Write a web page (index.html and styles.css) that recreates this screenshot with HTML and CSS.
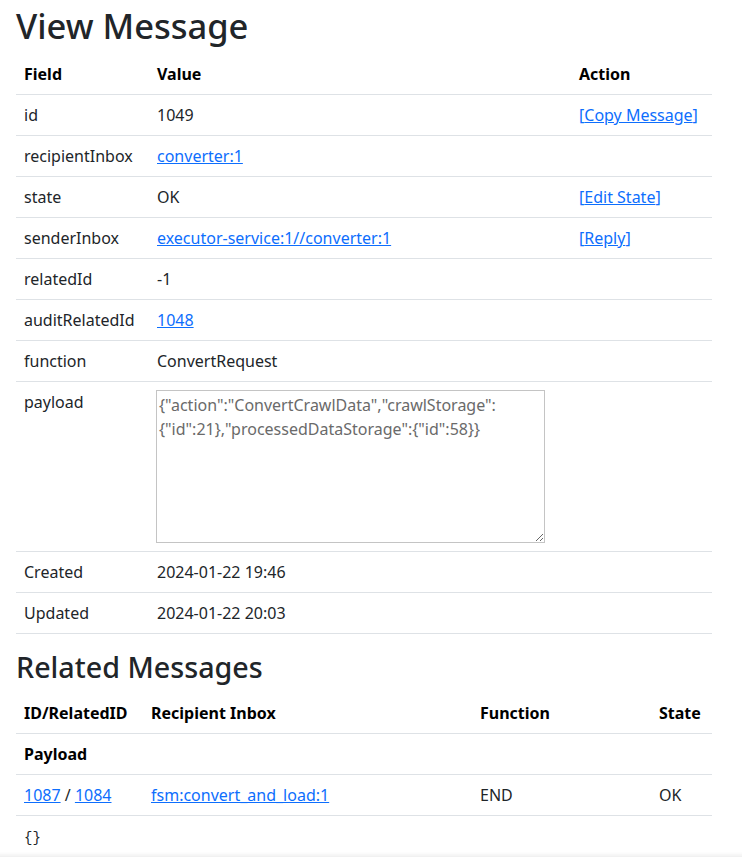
FILE: index.html
```html
<!DOCTYPE html>
<html>
<head>
<meta charset="utf-8">
<title>View Message</title>
<link rel="stylesheet" href="styles.css">
</head>
<body>
<main class="page">
  <h1 class="title">View Message</h1>
  <table class="tbl">
    <colgroup>
      <col class="c-field">
      <col class="c-value">
      <col class="c-action">
    </colgroup>
    <thead>
      <tr><th>Field</th><th>Value</th><th>Action</th></tr>
    </thead>
    <tbody>
      <tr><td>id</td><td>1049</td><td><a class="act" href="#">[<span>Copy Message</span>]</a></td></tr>
      <tr><td>recipientInbox</td><td><a href="#">converter:1</a></td><td></td></tr>
      <tr><td>state</td><td>OK</td><td><a class="act" href="#">[<span>Edit State</span>]</a></td></tr>
      <tr><td>senderInbox</td><td><a href="#">executor-service:1//converter:1</a></td><td><a class="act" href="#">[<span>Reply</span>]</a></td></tr>
      <tr><td>relatedId</td><td>-1</td><td></td></tr>
      <tr><td>auditRelatedId</td><td><a href="#">1048</a></td><td></td></tr>
      <tr><td>function</td><td>ConvertRequest</td><td></td></tr>
      <tr class="top"><td>payload</td><td><textarea class="payload" readonly>{"action":"ConvertCrawlData","crawlStorage":{"id":21},"processedDataStorage":{"id":58}}</textarea></td><td></td></tr>
      <tr><td>Created</td><td>2024-01-22 19:46</td><td></td></tr>
      <tr><td>Updated</td><td>2024-01-22 20:03</td><td></td></tr>
    </tbody>
  </table>

  <h2 class="subtitle">Related Messages</h2>
  <table class="tbl">
    <colgroup>
      <col class="c-id">
      <col class="c-inbox">
      <col class="c-func">
      <col class="c-state">
    </colgroup>
    <thead>
      <tr><th>ID/RelatedID</th><th>Recipient Inbox</th><th>Function</th><th>State</th></tr>
      <tr><th colspan="4">Payload</th></tr>
    </thead>
    <tbody>
      <tr><td><a href="#">1087</a> / <a href="#">1084</a></td><td><a href="#">fsm:convert_and_load:1</a></td><td>END</td><td>OK</td></tr>
      <tr><td colspan="4"><code class="json">{}</code></td></tr>
    </tbody>
  </table>
</main>
<div class="bottom-shade"></div>
</body>
</html>
```

FILE: styles.css
```css
html, body {
  margin: 0;
  padding: 0;
  background: #fff;
}
body {
  font-family: "Noto Sans", sans-serif;
  font-size: 16px;
  line-height: 1.5;
  color: #212529;
}
.page {
  padding: 0 30px 0 16px;
}
.title {
  margin: 0 0 8px;
  padding-top: 5px;
  font-size: 34.5px;
  font-weight: 500;
  line-height: 1.2;
}
.subtitle {
  margin: 0 0 8px;
  font-size: 28.7px;
  font-weight: 500;
  line-height: 1.2;
}
.tbl {
  width: 100%;
  border-collapse: collapse;
  table-layout: fixed;
  margin-bottom: 16px;
}
.tbl th, .tbl td {
  padding: 8px;
  text-align: left;
  vertical-align: top;
  border-bottom: 1px solid #dee2e6;
}
.tbl th {
  font-weight: 700;
  color: #000;
}
.c-field { width: 133px; }
.c-action { width: 141px; }
.c-id { width: 127px; }
.c-func { width: 179px; }
.c-state { width: 61px; }
a {
  color: #0d6efd;
  text-decoration: underline;
}
a.act {
  text-decoration: none;
}
a.act span {
  text-decoration: underline;
}
.payload {
  display: block;
  box-sizing: border-box;
  width: 389px;
  height: 153px;
  margin: 0 0 0 -1px;
  padding: 2px;
  border: 1px solid #c4c4c4;
  font-family: "Noto Sans", sans-serif;
  font-size: 16px;
  line-height: 1.5;
  color: #6a6a6a;
  background: #fff;
}
.json {
  font-family: "Liberation Mono", monospace;
  font-size: 14px;
  color: #212529;
}
.bottom-shade {
  position: fixed;
  left: 0;
  right: 0;
  bottom: 0;
  height: 5px;
  background: linear-gradient(to bottom, rgba(0,0,0,0), rgba(0,0,0,0.06));
  pointer-events: none;
}
```
